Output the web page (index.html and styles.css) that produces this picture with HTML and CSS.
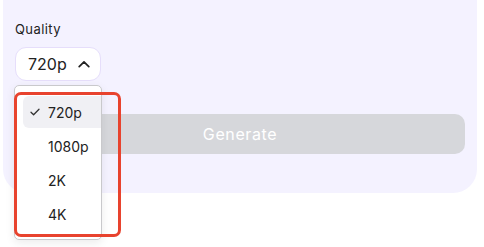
FILE: index.html
```html
<!DOCTYPE html>
<html>
<head>
<meta charset="utf-8">
<link rel="stylesheet" href="styles.css">
</head>
<body>
<div class="card">
  <div class="label">Quality</div>
  <button class="select"><span>720p</span>
    <svg class="chev" width="12" height="8" viewBox="0 0 12 8"><path d="M1.2 6.6 L6 1.8 L10.8 6.6" fill="none" stroke="#222" stroke-width="1.7" stroke-linecap="round" stroke-linejoin="round"/></svg>
  </button>
  <button class="generate">Generate</button>
</div>
<div class="menu">
  <div class="item selected">
    <svg class="check" width="10" height="8" viewBox="0 0 10 8"><path d="M1 4.2 L3.6 6.8 L9 1.2" fill="none" stroke="#333" stroke-width="1.3" stroke-linecap="round" stroke-linejoin="round"/></svg>
    <span>720p</span>
  </div>
  <div class="item"><span>1080p</span></div>
  <div class="item"><span>2K</span></div>
  <div class="item"><span>4K</span></div>
</div>
<div class="annot"></div>
</body>
</html>
```
FILE: styles.css
```css
html, body {
  margin: 0;
  padding: 0;
  background: #ffffff;
  font-family: "Inter", "DejaVu Sans", sans-serif;
  color: #222;
}
body {
  width: 484px;
  height: 247px;
  position: relative;
  overflow: hidden;
}
.card {
  margin-left: 3px;
  width: 474px;
  height: 193px;
  box-sizing: border-box;
  background: #f4f2ff;
  border-radius: 0 0 24px 24px;
  padding: 21px 12px 0 12px;
  display: flex;
  flex-direction: column;
  align-items: flex-start;
}
.label {
  font-size: 13px;
  line-height: 16px;
  letter-spacing: 0.4px;
  color: #222;
}
.select {
  margin-top: 10px;
  width: 86px;
  height: 34px;
  box-sizing: border-box;
  background: #fff;
  border: 1px solid #e6defb;
  border-radius: 11px;
  display: flex;
  align-items: center;
  padding: 0 0 0 12px;
  gap: 11px;
  font-family: inherit;
  font-size: 16px;
  color: #222;
}
.chev { display: block; margin-top: -1px; }
.generate {
  margin-top: 33px;
  width: 450px;
  height: 40px;
  border: none;
  border-radius: 10px;
  background: #d6d7db;
  color: #fff;
  font-family: inherit;
  font-size: 16px;
  font-weight: 400;
  letter-spacing: 0.6px;
}
.menu {
  position: absolute;
  left: 14px;
  top: 85px;
  width: 88px;
  height: 155px;
  box-sizing: border-box;
  background: #fff;
  border: 1px solid #c9c9cc;
  border-radius: 5px;
  box-shadow: 0 3px 10px rgba(0,0,0,0.08);
  padding: 10px 0 8px 8px;
  display: flex;
  flex-direction: column;
  gap: 2px;
}
.item {
  height: 32px;
  display: flex;
  align-items: center;
  padding-left: 25px;
  font-size: 14px;
  color: #222;
  position: relative;
}
.item.selected {
  background: #f0f0f4;
  border-radius: 6px 0 0 6px;
}
.check {
  position: absolute;
  left: 7px;
  top: 12px;
}
.annot {
  position: absolute;
  left: 14px;
  top: 92px;
  width: 107px;
  height: 145px;
  box-sizing: border-box;
  border: 3.5px solid #e8432e;
  border-radius: 7px;
}
```
